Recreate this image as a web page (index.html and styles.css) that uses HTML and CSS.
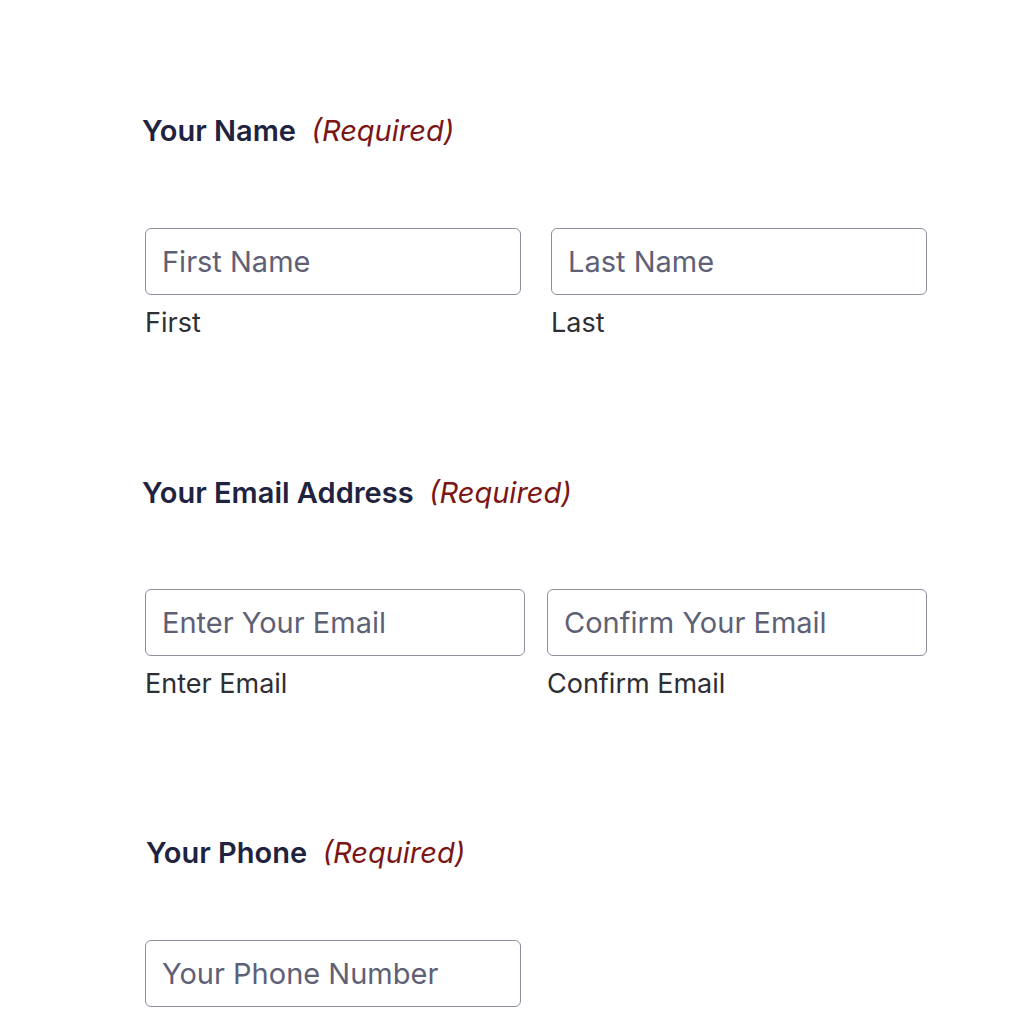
FILE: index.html
```html
<!DOCTYPE html>
<html lang="en">
<head>
<meta charset="utf-8">
<title>Form</title>
<link rel="stylesheet" href="styles.css">
</head>
<body>
<form class="form">
  <fieldset class="field field--name">
    <legend class="field-label">Your Name <span class="req">(Required)</span></legend>
    <div class="row row--name">
      <div class="col">
        <input class="input" type="text" placeholder="First Name">
        <span class="sub">First</span>
      </div>
      <div class="col">
        <input class="input" type="text" placeholder="Last Name">
        <span class="sub">Last</span>
      </div>
    </div>
  </fieldset>

  <fieldset class="field field--email">
    <legend class="field-label">Your Email Address <span class="req">(Required)</span></legend>
    <div class="row row--email">
      <div class="col">
        <input class="input" type="email" placeholder="Enter Your Email">
        <span class="sub">Enter Email</span>
      </div>
      <div class="col">
        <input class="input" type="email" placeholder="Confirm Your Email">
        <span class="sub">Confirm Email</span>
      </div>
    </div>
  </fieldset>

  <fieldset class="field field--phone">
    <legend class="field-label">Your Phone <span class="req">(Required)</span></legend>
    <div class="row row--phone">
      <div class="col">
        <input class="input" type="tel" placeholder="Your Phone Number">
      </div>
    </div>
  </fieldset>
</form>
</body>
</html>
```
FILE: styles.css
```css
html, body {
  margin: 0;
  padding: 0;
  background: #ffffff;
}

body {
  font-family: Inter, "Noto Sans", sans-serif;
  height: 1024px;
  overflow: hidden;
}

.form {
  width: 782px;
  padding: 114px 0 0 145px;
}

.field {
  border: 0;
  margin: 0;
  padding: 0;
  min-width: 0;
  display: flex;
  flex-direction: column;
}

.field-label {
  float: left;
  padding: 0;
  margin: 0 0 0 -3px;
  font-size: 29px;
  line-height: 34px;
  font-weight: 600;
  color: #1f2340;
  letter-spacing: 0;
}

.req {
  font-weight: 400;
  font-style: italic;
  color: #7b1616;
  margin-left: 8px;
}

.row {
  clear: both;
  display: flex;
  margin-top: 80px;
}

.row--name { gap: 30px; }
.row--email { gap: 22px; margin-top: 79px; }
.row--phone { margin-top: 70px; }

.field--email { margin-top: 136px; }
.field--phone { margin-top: 135px; }
.field--phone .field-label { margin-left: 1px; }

.col {
  flex: 1;
  display: flex;
  flex-direction: column;
}

.row--phone .col {
  flex: 0 0 376px;
}

.input {
  box-sizing: border-box;
  height: 67px;
  width: 100%;
  margin: 0;
  padding: 0 16px;
  border: 1px solid #8d8f9c;
  border-radius: 6px;
  background: #fff;
  font-family: Inter, "Noto Sans", sans-serif;
  font-size: 29px;
  color: #1f2340;
  outline: none;
}

.input::placeholder {
  color: #5e6176;
  opacity: 1;
}

.sub {
  margin-top: 11px;
  font-size: 27px;
  line-height: 34px;
  color: #2e2e35;
}
```
